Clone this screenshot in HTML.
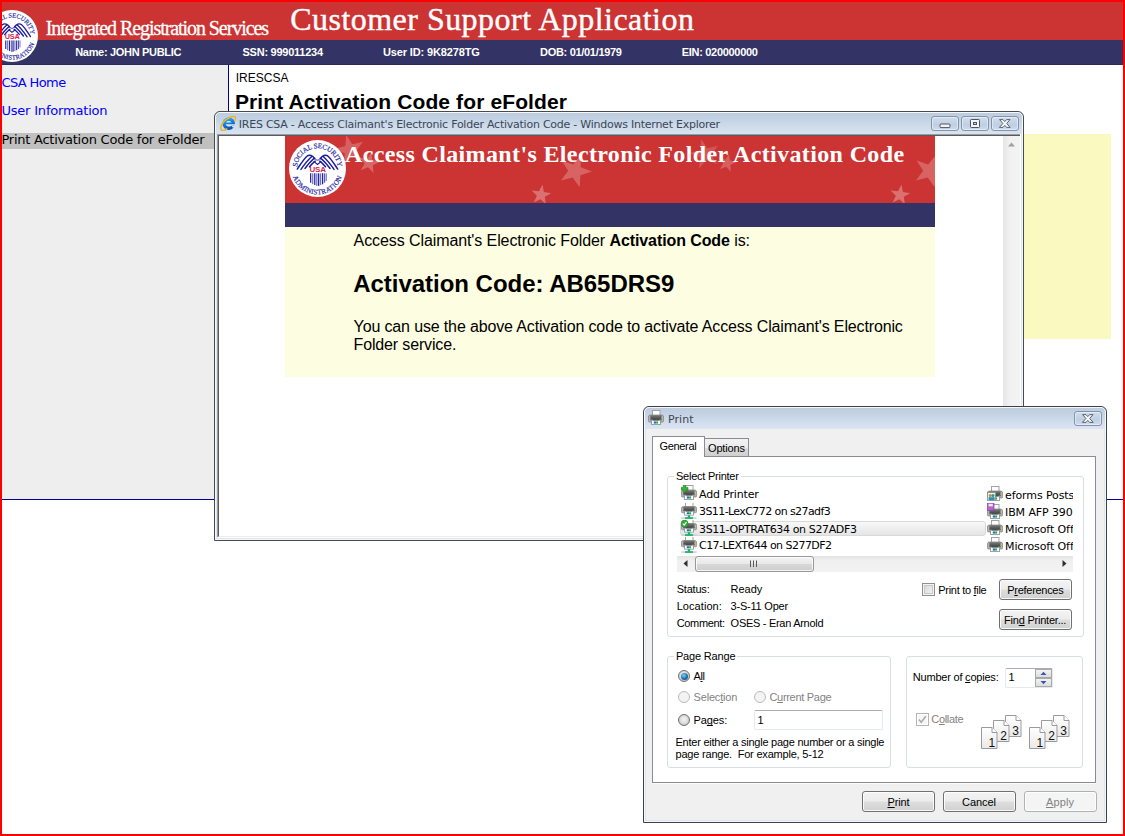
<!DOCTYPE html>
<html lang="en"><head><meta charset="utf-8">
<title>IRES CSA - Print Activation Code for eFolder</title>
<style>
html,body{margin:0;padding:0;background:#fff;}
body{width:1125px;height:836px;overflow:hidden;position:relative;font-family:"Liberation Sans",Arial,sans-serif;}
.a{position:absolute;}
.t{position:absolute;white-space:nowrap;line-height:1;margin:0;padding:0;}
.t b{font-weight:700;}
.t u{text-decoration:underline;text-decoration-skip-ink:none;text-underline-offset:1px;text-decoration-thickness:1px;}
#frame{position:absolute;left:0;top:0;width:1121px;height:832px;border:2px solid #ff0000;z-index:50;pointer-events:none;}
.btn{position:absolute;box-sizing:border-box;border:1px solid #707070;border-radius:3px;background:linear-gradient(#f3f3f3 0%,#ececec 48%,#dedede 52%,#d0d0d0 100%);box-shadow:inset 0 0 0 1px rgba(255,255,255,.85);}
.btn.dis{border-color:#adb2b5;background:#f4f4f4;}
.grp{position:absolute;box-sizing:border-box;border:1px solid #d5dfe5;border-radius:3px;}
.grplbl{position:absolute;background:#fff;height:12px;}
.wb{position:absolute;box-sizing:border-box;border:1px solid #8592ad;border-radius:3px;background:linear-gradient(#cfdceb 0%,#c3d2e4 50%,#bccde1 51%,#cddbeb 100%);box-shadow:inset 0 0 0 1px rgba(255,255,255,.45);}
.radio{position:absolute;box-sizing:border-box;width:12px;height:12px;border-radius:50%;border:1px solid #6f6f6f;background:radial-gradient(circle at 50% 45%,#f4f4f4 0%,#dcdcdc 50%,#b4b4b4 100%);}
.radio.dis{border-color:#bcbcbc;background:#f3f3f3;}
.chk{position:absolute;box-sizing:border-box;width:13px;height:13px;border:1px solid #8e8f8f;background:linear-gradient(135deg,#d3d3d3,#f6f6f6);box-shadow:inset 0 0 0 1px #f4f4f4,inset 0 0 0 2px #c4c7cb;}
</style></head><body>
<svg width="0" height="0" style="position:absolute">
<defs>
<g id="seal">
 <circle cx="50" cy="50" r="50" fill="#fff"/>
 <path id="arcT" d="M14.59,52.48 A35.5,35.5 0 1 1 85.41,52.48" fill="none"/>
 <path id="arcB" d="M4.94,56.33 A45.5,45.5 0 0 0 95.06,56.33" fill="none"/>
 <text font-family="'Liberation Serif',serif" font-size="12.5" font-weight="400" fill="#3030a8" stroke="#3030a8" stroke-width="0.35" letter-spacing="-0.2"><textPath href="#arcT" startOffset="50%" text-anchor="middle">SOCIAL SECURITY</textPath></text>
 <text font-family="'Liberation Serif',serif" font-size="12.5" font-weight="400" fill="#3030a8" stroke="#3030a8" stroke-width="0.35" letter-spacing="0.45"><textPath href="#arcB" startOffset="50%" text-anchor="middle">ADMINISTRATION</textPath></text>
 <g fill="none" stroke="#1c1c9c" stroke-width="2.6" stroke-linecap="round">
  <path d="M45,33 C42,27 36,25 32,28 C26,33 20,43 14.5,51"/>
  <path d="M40,29 C33,35 27,43 21,51.5"/>
  <path d="M43,33 C37,38 33,43 28,50"/>
  <path d="M46,37 C42,40 39,43 36,47"/>
  <path d="M55,33 C58,27 64,25 68,28 C74,33 80,43 85.5,51"/>
  <path d="M60,29 C67,35 73,43 79,51.5"/>
  <path d="M57,33 C63,38 67,43 72,50"/>
  <path d="M54,37 C58,40 61,43 64,47"/>
  <path d="M45,31 C46,37 54,37 55,31" stroke-width="1.6"/>
  <path d="M44,38 L50,43 L56,38" stroke-width="2"/>
 </g>
 <text x="50.3" y="56.6" text-anchor="middle" font-family="'Liberation Sans',sans-serif" font-size="14" font-weight="700" fill="#d21f4c" letter-spacing="-0.3">USA</text>
 <g stroke="#2424a4">
  <path d="M38,58.5V75" stroke-width="2.2"/><path d="M41.7,58.5V77.5" stroke-width="1.4"/><path d="M45.2,58.5V79" stroke-width="2.2"/><path d="M48.8,58.5V80.5" stroke-width="1.4"/><path d="M52,58.5V80.5" stroke-width="2.4"/><path d="M55.6,58.5V79" stroke-width="1.4"/><path d="M59,58.5V77.5" stroke-width="2.2"/><path d="M62.6,58.5V75" stroke-width="1.6"/><path d="M65.4,58.5V72" stroke-width="1.2"/>
 </g>
</g>
<g id="star"><path d="M0,-10 L2.35,-3.24 L9.51,-3.09 L3.8,1.24 L5.88,8.09 L0,4 L-5.88,8.09 L-3.8,1.24 L-9.51,-3.09 L-2.35,-3.24 Z"/></g>
<g id="ie">
 <circle cx="8.7" cy="8.6" r="6.3" fill="url(#ieg)"/>
 <path d="M6,7.6 C6.3,5.6 11,5.4 11.5,7.6 Z" fill="#dfe9f3"/>
 <path d="M5.6,9.3 H15.2 V10.4 H11.6 C10.8,12 6.6,12.3 5.6,9.3Z" fill="#dfe9f3"/>
 <path d="M11.4,10.4 H15.6 V12 L12.5,12.6Z" fill="#d6e2ef"/>
 <path d="M15.3,2.2 C13.6,0.2 8,2.2 4,6.6 C0.8,10.2 0,13.9 1.5,15.1 C2.9,16.1 5.4,14.8 6.6,13.8" fill="none" stroke="#f2b41c" stroke-width="1.5" stroke-linecap="round"/>
 <path d="M15.3,2.2 C15.9,3.2 15.6,4.4 15,5.4" fill="none" stroke="#f2b41c" stroke-width="1.3" stroke-linecap="round"/>
</g>
<linearGradient id="ieg" x1="0" y1="0" x2="0.4" y2="1"><stop offset="0" stop-color="#4fc3ff"/><stop offset="0.5" stop-color="#1a86e0"/><stop offset="1" stop-color="#0a4fb0"/></linearGradient>
<g id="prn">
 <rect x="4.5" y="0.5" width="7.5" height="5.2" fill="#fff" stroke="#a3a3a3" stroke-width="1"/>
 <path d="M2.5,5 H13.5 Q15.6,5 15.6,7 V10.8 Q15.6,12 14.4,12 H1.6 Q0.4,12 0.4,10.8 V7 Q0.4,5 2.5,5Z" fill="#b4b4b4" stroke="#7a7a7a" stroke-width="0.7"/>
 <rect x="2.4" y="5.2" width="11.2" height="5" fill="url(#prg)"/>
 <rect x="3.6" y="9.8" width="8.8" height="4.8" fill="#fff" stroke="#8a8a8a" stroke-width="0.8"/>
 <rect x="4.4" y="9.4" width="7.2" height="1.1" fill="#2e2e2e"/>
 <rect x="5.8" y="11.4" width="2.2" height="2.2" fill="#1f6fd0"/><rect x="8.1" y="11.4" width="2" height="2.2" fill="#2aa84a"/>
 <rect x="13.5" y="7.4" width="1.1" height="1.4" fill="#8fe070"/>
</g>
<linearGradient id="prg" x1="0" y1="0" x2="0" y2="1"><stop offset="0" stop-color="#7a7a7a"/><stop offset="1" stop-color="#3c3c3c"/></linearGradient>
<g id="net">
 <rect x="0.3" y="14.3" width="15.4" height="1.5" fill="#c9cfd2"/>
 <rect x="6.8" y="12.2" width="2.4" height="2.6" fill="#18b566"/>
 <rect x="4" y="14.2" width="8" height="1.7" fill="#18b566"/>
</g>
<g id="pg">
 <path d="M0.5,0.5 H11 L16,5.5 V21.5 H0.5 Z" fill="url(#pgg)" stroke="#9b9b9b" stroke-width="1"/>
 <path d="M11,0.5 V5.5 H16" fill="#fff" stroke="#9b9b9b" stroke-width="1"/>
</g>
<linearGradient id="pgg" x1="0" y1="0" x2="0" y2="1"><stop offset="0" stop-color="#fff"/><stop offset="1" stop-color="#e9e9e9"/></linearGradient>
</defs></svg>
<!-- ===== base page ===== -->
<div class="a" style="left:2px;top:2px;width:1121px;height:38px;background:#cc3333;"></div>
<div class="a" style="left:2px;top:40px;width:1121px;height:25px;background:#333366;border-bottom:1px solid #2a2a5c;box-sizing:border-box;"></div>
<div class="a" style="left:2px;top:65px;width:226px;height:434px;background:#eeeeee;"></div>
<div class="a" style="left:228px;top:65px;width:1px;height:434px;background:#000099;"></div>
<div class="a" style="left:2px;top:499px;width:1121px;height:1px;background:#000099;"></div>
<div class="a" style="left:2px;top:133px;width:226px;height:16px;background:#c0c0c0;"></div>
<div class="a" style="left:236px;top:134px;width:875px;height:205px;background:#fafac0;"></div>
<!-- seal (header) -->
<svg class="a" style="left:-14px;top:9.5px;" width="52" height="52" viewBox="0 0 100 100">
<use href="#seal"/></svg>
<div class="t" style="-webkit-text-stroke:0.30px #fff;left:45.7px;top:17.8px;font-family:'Liberation Serif', Georgia, serif;font-size:20px;font-weight:400;color:#fff;letter-spacing:-1.071px;">Integrated Registration Services</div>
<div class="t" style="-webkit-text-stroke:0.40px #fff;left:290.26px;top:3.2px;font-family:'Liberation Serif', Georgia, serif;font-size:32px;font-weight:400;color:#fff;letter-spacing:0.466px;">Customer Support Application</div>
<div class="t" style="left:75.2px;top:47px;font-family:'Liberation Sans', Arial, sans-serif;font-size:11px;font-weight:700;color:#fff;letter-spacing:-0.31px;">Name: JOHN PUBLIC</div>
<div class="t" style="left:242.5px;top:47px;font-family:'Liberation Sans', Arial, sans-serif;font-size:11px;font-weight:700;color:#fff;letter-spacing:-0.247px;">SSN: 999011234</div>
<div class="t" style="left:383.0px;top:47px;font-family:'Liberation Sans', Arial, sans-serif;font-size:11px;font-weight:700;color:#fff;letter-spacing:-0.141px;">User ID: 9K8278TG</div>
<div class="t" style="left:540.0px;top:47px;font-family:'Liberation Sans', Arial, sans-serif;font-size:11px;font-weight:700;color:#fff;letter-spacing:-0.302px;">DOB: 01/01/1979</div>
<div class="t" style="left:681.8px;top:47px;font-family:'Liberation Sans', Arial, sans-serif;font-size:11px;font-weight:700;color:#fff;letter-spacing:-0.31px;">EIN: 020000000</div>
<div class="t" style="left:1.42px;top:75.6px;font-family:'DejaVu Sans', Verdana, sans-serif;font-size:13px;font-weight:400;color:#0000ff;letter-spacing:-0.604px;">CSA Home</div>
<div class="t" style="left:1.42px;top:104.4px;font-family:'DejaVu Sans', Verdana, sans-serif;font-size:13px;font-weight:400;color:#0000ff;letter-spacing:-0.19px;">User Information</div>
<div class="t" style="left:1.42px;top:133px;font-family:'DejaVu Sans', Verdana, sans-serif;font-size:13px;font-weight:400;color:#000;letter-spacing:-0.24px;">Print Activation Code for eFolder</div>
<div class="t" style="left:235.76px;top:71.8px;font-family:'Liberation Sans', Arial, sans-serif;font-size:12px;font-weight:400;color:#000;letter-spacing:-0.001px;">IRESCSA</div>
<div class="t" style="left:234.96px;top:90.9px;font-family:'Liberation Sans', Arial, sans-serif;font-size:21px;font-weight:700;color:#000;letter-spacing:0.117px;">Print Activation Code for eFolder</div>
<!-- ===== IE popup window ===== -->
<div class="a" style="left:214px;top:111px;width:810px;height:430px;box-sizing:border-box;border:1px solid #4a4a4a;border-radius:6px 6px 0 0;background:linear-gradient(#bbcbdd 0px,#c5d4e5 8px,#dbe6f3 24px,#dbe6f3 100%);overflow:hidden;">
 <div class="a" style="left:0;top:0;width:806px;height:426px;border:1px solid #f4f8fc;border-radius:5px 5px 0 0;"></div>
</div>
<div class="a" style="left:217px;top:134px;width:803px;height:403px;background:#9a9ca0;"></div>
<div class="a" style="left:218px;top:135px;width:802px;height:1px;background:#5a5a5a;"></div>
<div class="a" style="left:218px;top:136px;width:1px;height:400px;background:#5a5a5a;"></div>
<div class="a" style="left:1020px;top:134px;width:1px;height:404px;background:#fdfeff;"></div>
<div class="a" style="left:219px;top:136px;width:801px;height:400px;background:#fff;"></div>
<div class="a" style="left:219px;top:536px;width:801px;height:1px;background:#ededed;"></div>
<div class="a" style="left:217px;top:537px;width:804px;height:1px;background:#fff;"></div>
<svg class="a" style="left:220px;top:115px;" width="16" height="16" viewBox="0 0 16 16"><use href="#ie"/></svg>
<!-- caption buttons -->
<div class="wb" style="left:931px;top:116px;width:28px;height:15px;"></div>
<div class="wb" style="left:961px;top:116px;width:28px;height:15px;"></div>
<div class="wb" style="left:991px;top:116px;width:28px;height:15px;"></div>
<svg class="a" style="left:931px;top:116px;" width="88" height="15" viewBox="0 0 88 15">
 <rect x="9" y="8" width="10" height="3.6" rx="1" fill="#f4f4f4" stroke="#4a5368" stroke-width="1"/>
 <rect x="39.5" y="3.5" width="9" height="8" rx="0.8" fill="#f4f4f4" stroke="#4a5368" stroke-width="1"/>
 <rect x="42.5" y="6.5" width="3" height="2" fill="#c9d7e8" stroke="#4a5368" stroke-width="1"/>
 <path d="M68.6,3.6 L72,3.6 L73.8,5.6 L75.6,3.6 L79,3.6 L75.7,7.5 L79.2,11.4 L75.6,11.4 L73.8,9.4 L72,11.4 L68.4,11.4 L71.9,7.5 Z" fill="#f6f6f6" stroke="#4a5368" stroke-width="0.9" stroke-linejoin="round"/>
</svg>
<!-- scrollbar -->
<div class="a" style="left:1003px;top:136px;width:17px;height:400px;background:linear-gradient(90deg,#e6e6e6,#f1f1f1 40%,#f3f3f3);"></div>
<svg class="a" style="left:1003px;top:136px;" width="17" height="17" viewBox="0 0 17 17"><path d="M5,10.5 L8.5,6.5 L12,10.5 Z" fill="#a0a0a0"/></svg>
<!-- banner -->
<div class="a" style="left:285px;top:136px;width:650px;height:67px;background:#cc3333;overflow:hidden;">
 <svg class="a" style="left:0;top:0;" width="650" height="67" viewBox="285 136 650 67">
  <g fill="#fff">
   <use href="#star" transform="translate(350,150) rotate(-14) scale(1.55)" opacity=".22"/>
   <use href="#star" transform="translate(369,163) rotate(12) scale(1.1)" opacity=".25"/>
   <use href="#star" transform="translate(575,171) rotate(20) scale(1.7)" opacity=".24"/>
   <use href="#star" transform="translate(541,195) rotate(8) scale(1.05)" opacity=".3"/>
   <use href="#star" transform="translate(705,154) rotate(-14) scale(1.55)" opacity=".17"/>
   <use href="#star" transform="translate(727,163) rotate(12) scale(.95)" opacity=".22"/>
   <use href="#star" transform="translate(930,171) rotate(20) scale(1.7)" opacity=".24"/>
   <use href="#star" transform="translate(900,195) rotate(8) scale(1.05)" opacity=".3"/>
  </g>
 </svg>
</div>
<div class="a" style="left:285px;top:203px;width:650px;height:24px;background:#333366;"></div>
<div class="a" style="left:285px;top:227px;width:650px;height:150px;background:#fdfde1;"></div>
<svg class="a" style="left:289px;top:140px;" width="57" height="57" viewBox="0 0 100 100"><use href="#seal"/></svg>
<div class="t" style="left:238.81px;top:118.6px;font-family:'DejaVu Sans', Verdana, sans-serif;font-size:11px;font-weight:400;color:#3b4657;letter-spacing:-0.242px;">IRES CSA - Access Claimant's Electronic Folder Activation Code - Windows Internet Explorer</div>
<div class="t" style="left:345.02px;top:142px;font-family:'Liberation Serif', Georgia, serif;font-size:24px;font-weight:700;color:#fff;letter-spacing:0.36px;">Access Claimant's Electronic Folder Activation Code</div>
<div class="t" style="left:353.58px;top:232.8px;font-family:'Liberation Sans', Arial, sans-serif;font-size:16px;font-weight:400;color:#000;letter-spacing:-0.092px;">Access Claimant's Electronic Folder <b>Activation Code</b> is:</div>
<div class="t" style="left:353.22px;top:271.5px;font-family:'Liberation Sans', Arial, sans-serif;font-size:24px;font-weight:700;color:#000;letter-spacing:-0.028px;">Activation Code: AB65DRS9</div>
<div class="t" style="left:353.58px;top:318.7px;font-family:'Liberation Sans', Arial, sans-serif;font-size:16px;font-weight:400;color:#000;letter-spacing:-0.141px;">You can use the above Activation code to activate Access Claimant's Electronic</div>
<div class="t" style="left:353.58px;top:336.8px;font-family:'Liberation Sans', Arial, sans-serif;font-size:16px;font-weight:400;color:#000;letter-spacing:-0.149px;">Folder service.</div>
<!-- ===== Print dialog ===== -->
<div class="a" style="left:643px;top:406px;width:464px;height:417px;box-sizing:border-box;border:1px solid #404040;border-radius:6px 6px 0 0;background:linear-gradient(#bbcbdd 0px,#c5d4e5 8px,#dbe6f3 22px,#dbe6f3 100%);overflow:hidden;">
 <div class="a" style="left:0;top:0;width:460px;height:413px;border:1px solid #f4f8fc;border-radius:5px 5px 0 0;"></div>
</div>
<div class="a" style="left:646px;top:429px;width:458px;height:391px;background:#f0f0f0;"></div>
<svg class="a" style="left:648px;top:410px;" width="16" height="16" viewBox="0 0 16 16"><use href="#prn"/></svg>
<div class="wb" style="left:1074px;top:411px;width:28px;height:15px;"></div>
<svg class="a" style="left:1074px;top:411px;" width="28" height="15" viewBox="60 0 28 15">
 <path d="M68.6,3.6 L72,3.6 L73.8,5.6 L75.6,3.6 L79,3.6 L75.7,7.5 L79.2,11.4 L75.6,11.4 L73.8,9.4 L72,11.4 L68.4,11.4 L71.9,7.5 Z" fill="#f6f6f6" stroke="#4a5368" stroke-width="0.9" stroke-linejoin="round"/>
</svg>
<!-- tab page -->
<div class="a" style="left:652px;top:456px;width:444px;height:327px;box-sizing:border-box;border:1px solid #898c95;background:#fff;"></div>
<div class="a" style="left:652px;top:783px;width:444px;height:1px;background:#fbfbfb;"></div>
<!-- tabs -->
<div class="a" style="left:704px;top:438px;width:45px;height:19px;box-sizing:border-box;border:1px solid #898c95;border-bottom:none;border-left:none;background:linear-gradient(#f2f2f2 0%,#ebebeb 50%,#dddddd 51%,#cfcfcf 100%);height:18px;"></div>
<div class="a" style="left:652px;top:436px;width:53px;height:21px;box-sizing:border-box;border:1px solid #898c95;border-bottom:none;background:#fff;"></div>
<!-- Select Printer group -->
<div class="grp" style="left:667px;top:476px;width:417px;height:161px;"></div>
<div class="grplbl" style="left:674px;top:470px;width:67px;"></div>
<!-- selected row -->
<div class="a" style="left:680px;top:521px;width:306px;height:15px;box-sizing:border-box;border:1px solid #d9d9d9;border-radius:3px;background:linear-gradient(#f8f8f8,#e5e5e5);"></div>
<!-- printer icons left -->
<svg class="a" style="left:681px;top:485px;" width="16" height="16" viewBox="0 0 16 16"><use href="#prn"/><path d="M2.2,0.2h2.6v2.2h2.2v2.6h-2.2v2.2h-2.6v-2.2h-2.2v-2.6h2.2z" fill="#3db33d" stroke="#1d7f25" stroke-width="0.6"/></svg>
<svg class="a" style="left:681px;top:503px;" width="16" height="16" viewBox="0 0 16 16"><use href="#prn" transform="translate(0,-1) scale(1,.9)"/><use href="#net"/></svg>
<svg class="a" style="left:681px;top:520px;" width="16" height="16" viewBox="0 0 16 16"><use href="#prn" transform="translate(0,-1) scale(1,.9)"/><use href="#net"/><circle cx="3.6" cy="3.6" r="3.5" fill="#2fae3c" stroke="#1c7d28" stroke-width="0.5"/><path d="M1.8,3.7 L3.1,5.1 L5.5,2.2" fill="none" stroke="#fff" stroke-width="1.1"/></svg>
<svg class="a" style="left:681px;top:537px;" width="16" height="16" viewBox="0 0 16 16"><use href="#prn" transform="translate(0,-1) scale(1,.9)"/><use href="#net"/></svg>
<!-- printer icons right -->
<svg class="a" style="left:987px;top:486px;" width="16" height="16" viewBox="0 0 16 16"><use href="#prn"/><rect x="0.5" y="6.5" width="8" height="8" fill="#e9f3f6" stroke="#8a8a8a" stroke-width="0.8"/><circle cx="3.2" cy="9.6" r="1.5" fill="#c98a3a"/><circle cx="6" cy="9.6" r="1.5" fill="#2c9f6a"/><rect x="1.6" y="11.2" width="6" height="2.8" fill="#2a8fb5"/></svg>
<svg class="a" style="left:987px;top:503px;" width="16" height="16" viewBox="0 0 16 16"><use href="#prn" transform="translate(0,1)"/><rect x="0.5" y="0.5" width="6.5" height="7" fill="#b067c9" stroke="#8a3fa8" stroke-width="0.7"/><rect x="1.6" y="0.8" width="4.2" height="2.6" fill="#f1e4f6"/></svg>
<svg class="a" style="left:987px;top:520px;" width="16" height="16" viewBox="0 0 16 16"><use href="#prn"/></svg>
<svg class="a" style="left:987px;top:537px;" width="16" height="16" viewBox="0 0 16 16"><use href="#prn"/></svg>
<!-- list h-scrollbar -->
<div class="a" style="left:677px;top:556px;width:396px;height:16px;background:linear-gradient(#e3e3e3,#f0f0f0 30%,#f2f2f2);"></div>
<div class="a" style="left:695px;top:556px;width:119px;height:16px;box-sizing:border-box;border:1px solid #979797;border-radius:3px;background:linear-gradient(#f3f3f3 0%,#e9e9e9 48%,#d8d8d8 52%,#cdcdcd 100%);box-shadow:inset 0 0 0 1px rgba(255,255,255,.8);"></div>
<svg class="a" style="left:677px;top:556px;" width="396" height="16" viewBox="0 0 396 16">
 <path d="M10.5,4 V11 L6.5,7.5 Z" fill="#303030"/><path d="M385.5,4 V11 L389.5,7.5 Z" fill="#303030"/>
 <path d="M73.5,4.5V11M76.5,4.5V11M79.5,4.5V11" stroke="#5b5b5b" stroke-width="1"/>
</svg>
<!-- print to file / buttons -->
<div class="chk" style="left:922px;top:583px;"></div>
<div class="btn" style="left:999px;top:579px;width:73px;height:21px;"></div>
<div class="btn" style="left:999px;top:609px;width:73px;height:21px;"></div>
<!-- Page Range group -->
<div class="grp" style="left:667px;top:656px;width:224px;height:112px;"></div>
<div class="grplbl" style="left:674px;top:650px;width:63px;"></div>
<div class="radio" style="left:678px;top:670px;"></div>
<div class="a" style="left:680.5px;top:672.5px;width:7px;height:7px;border-radius:50%;background:radial-gradient(circle at 40% 35%,#7fd0f2,#176fb0 55%,#0b3f74);"></div>
<div class="radio dis" style="left:678px;top:691px;"></div>
<div class="radio dis" style="left:754px;top:691px;"></div>
<div class="radio" style="left:678px;top:714px;"></div>
<div class="a" style="left:754px;top:710px;width:129px;height:20px;box-sizing:border-box;border:1px solid #e3e9ef;border-top-color:#abadb3;border-radius:2px;background:#fff;"></div>
<!-- Copies group -->
<div class="grp" style="left:906px;top:656px;width:177px;height:112px;"></div>
<div class="a" style="left:1005px;top:668px;width:48px;height:20px;box-sizing:border-box;border:1px solid #e3e9ef;border-top-color:#abadb3;border-radius:2px;background:#fff;"></div>
<div class="a" style="left:1035px;top:669px;width:17px;height:9px;box-sizing:border-box;border:1px solid #a9a9a9;background:linear-gradient(#f4f4f4,#dcdcdc);"></div>
<div class="a" style="left:1035px;top:678px;width:17px;height:9px;box-sizing:border-box;border:1px solid #a9a9a9;background:linear-gradient(#f4f4f4,#dcdcdc);"></div>
<svg class="a" style="left:1035px;top:669px;" width="17" height="18" viewBox="0 0 17 18"><path d="M5.5,6 L8.5,2.8 L11.5,6 Z M5.5,12 L8.5,15.2 L11.5,12 Z" fill="#3a56a8"/></svg>
<div class="chk" style="left:916px;top:713px;border-color:#b5b5b5;background:#f6f6f6;box-shadow:inset 0 0 0 1px #fff;"></div>
<svg class="a" style="left:916px;top:713px;" width="13" height="13" viewBox="0 0 13 13"><path d="M3,6.6 L5.2,9.2 L9.8,3.2" fill="none" stroke="#a9a9a9" stroke-width="1.5"/></svg>
<!-- bottom buttons -->
<div class="btn" style="left:862px;top:791px;width:73px;height:21px;"></div>
<div class="btn" style="left:943px;top:791px;width:73px;height:21px;"></div>
<div class="btn dis" style="left:1024px;top:791px;width:73px;height:21px;"></div>
<div class="t" style="left:668.0px;top:413.8px;font-family:'DejaVu Sans', Verdana, sans-serif;font-size:11px;font-weight:400;color:#3b4657;letter-spacing:0.044px;">Print</div>
<div class="t" style="left:659.5px;top:440.7px;font-family:'Liberation Sans', Arial, sans-serif;font-size:11px;font-weight:400;color:#000;letter-spacing:-0.325px;">General</div>
<div class="t" style="left:708.0px;top:442.5px;font-family:'Liberation Sans', Arial, sans-serif;font-size:11px;font-weight:400;color:#000;letter-spacing:-0.155px;">Options</div>
<div class="t" style="left:676.0px;top:470.6px;font-family:'Liberation Sans', Arial, sans-serif;font-size:11px;font-weight:400;color:#000;letter-spacing:-0.242px;">Select Printer</div>
<div class="t" style="left:699.0px;top:489.4px;font-family:'DejaVu Sans', Verdana, sans-serif;font-size:11px;font-weight:400;color:#000;letter-spacing:-0.16px;">Add Printer</div>
<div class="t" style="left:699.0px;top:506.3px;font-family:'DejaVu Sans', Verdana, sans-serif;font-size:11px;font-weight:400;color:#000;letter-spacing:-0.586px;">3S11-LexC772 on s27adf3</div>
<div class="t" style="left:699.0px;top:523.5px;font-family:'DejaVu Sans', Verdana, sans-serif;font-size:11px;font-weight:400;color:#000;letter-spacing:-0.373px;">3S11-OPTRAT634 on S27ADF3</div>
<div class="t" style="left:699.0px;top:540.4px;font-family:'DejaVu Sans', Verdana, sans-serif;font-size:11px;font-weight:400;color:#000;letter-spacing:-0.532px;">C17-LEXT644 on S277DF2</div>
<div class="t" style="left:676.71px;top:583.8px;font-family:'Liberation Sans', Arial, sans-serif;font-size:11px;font-weight:400;color:#000;letter-spacing:-0.21px;">Status:</div>
<div class="t" style="left:730.61px;top:583.8px;font-family:'Liberation Sans', Arial, sans-serif;font-size:11px;font-weight:400;color:#000;letter-spacing:-0.052px;">Ready</div>
<div class="t" style="left:676.71px;top:600.8px;font-family:'Liberation Sans', Arial, sans-serif;font-size:11px;font-weight:400;color:#000;letter-spacing:0.054px;">Location:</div>
<div class="t" style="left:730.61px;top:600.8px;font-family:'Liberation Sans', Arial, sans-serif;font-size:11px;font-weight:400;color:#000;letter-spacing:-0.223px;">3-S-11 Oper</div>
<div class="t" style="left:676.71px;top:618.4px;font-family:'Liberation Sans', Arial, sans-serif;font-size:11px;font-weight:400;color:#000;letter-spacing:-0.337px;">Comment:</div>
<div class="t" style="left:730.61px;top:618.4px;font-family:'Liberation Sans', Arial, sans-serif;font-size:11px;font-weight:400;color:#000;letter-spacing:-0.29px;">OSES - Eran Arnold</div>
<div class="t" style="left:938.3px;top:584.7px;font-family:'Liberation Sans', Arial, sans-serif;font-size:11px;font-weight:400;color:#000;letter-spacing:-0.3px;">Print to <u>f</u>ile</div>
<div class="t" style="left:1007.3px;top:584.7px;font-family:'Liberation Sans', Arial, sans-serif;font-size:11px;font-weight:400;color:#000;letter-spacing:-0.294px;">P<u>r</u>eferences</div>
<div class="t" style="left:1004.11px;top:614.6px;font-family:'Liberation Sans', Arial, sans-serif;font-size:11px;font-weight:400;color:#000;letter-spacing:-0.225px;">Fin<u>d</u> Printer...</div>
<div class="t" style="left:675.9px;top:651.3px;font-family:'Liberation Sans', Arial, sans-serif;font-size:11px;font-weight:400;color:#000;letter-spacing:-0.165px;">Page Range</div>
<div class="t" style="left:693.61px;top:671px;font-family:'Liberation Sans', Arial, sans-serif;font-size:11px;font-weight:400;color:#000;letter-spacing:-0.48px;">A<u>l</u>l</div>
<div class="t" style="left:693.61px;top:691.8px;font-family:'Liberation Sans', Arial, sans-serif;font-size:11px;font-weight:400;color:#838383;letter-spacing:-0.199px;">Selec<u>t</u>ion</div>
<div class="t" style="left:769.4px;top:691.8px;font-family:'Liberation Sans', Arial, sans-serif;font-size:11px;font-weight:400;color:#838383;letter-spacing:-0.297px;">C<u>u</u>rrent Page</div>
<div class="t" style="left:693.61px;top:714.6px;font-family:'Liberation Sans', Arial, sans-serif;font-size:11px;font-weight:400;color:#000;letter-spacing:-0.118px;">Pa<u>g</u>es:</div>
<div class="t" style="left:757.5px;top:714.6px;font-family:'Liberation Sans', Arial, sans-serif;font-size:11px;font-weight:400;color:#000;letter-spacing:0px;">1</div>
<div class="t" style="left:675.5px;top:737px;font-family:'Liberation Sans', Arial, sans-serif;font-size:11px;font-weight:400;color:#000;letter-spacing:-0.24px;">Enter either a single page number or a single</div>
<div class="t" style="left:675.5px;top:749.4px;font-family:'Liberation Sans', Arial, sans-serif;font-size:11px;font-weight:400;color:#000;letter-spacing:-0.204px;">page range.&nbsp; For example, 5-12</div>
<div class="t" style="left:912.8px;top:672.4px;font-family:'Liberation Sans', Arial, sans-serif;font-size:11px;font-weight:400;color:#000;letter-spacing:-0.212px;">Number of <u>c</u>opies:</div>
<div class="t" style="left:1008.5px;top:672.4px;font-family:'Liberation Sans', Arial, sans-serif;font-size:11px;font-weight:400;color:#000;letter-spacing:0px;">1</div>
<div class="t" style="left:931.3px;top:714.4px;font-family:'Liberation Sans', Arial, sans-serif;font-size:11px;font-weight:400;color:#838383;letter-spacing:-0.329px;">C<u>o</u>llate</div>
<div class="t" style="left:887.5px;top:796.5px;font-family:'Liberation Sans', Arial, sans-serif;font-size:11px;font-weight:400;color:#000;letter-spacing:-0.159px;"><u>P</u>rint</div>
<div class="t" style="left:962.0px;top:796.5px;font-family:'Liberation Sans', Arial, sans-serif;font-size:11px;font-weight:400;color:#000;letter-spacing:-0.052px;">Cancel</div>
<div class="t" style="left:1046.01px;top:796.5px;font-family:'Liberation Sans', Arial, sans-serif;font-size:11px;font-weight:400;color:#838383;letter-spacing:0.115px;"><u>A</u>pply</div>
<!-- collate pages -->
<svg class="a" style="left:980px;top:714px;" width="96" height="38" viewBox="0 0 96 38" font-family="'Liberation Sans',sans-serif" font-size="12" fill="#111">
 <g id="set3">
  <use href="#pg" x="25" y="1"/><text x="35.5" y="20.5" text-anchor="middle">3</text>
  <use href="#pg" x="13" y="6"/><text x="23.5" y="26" text-anchor="middle">2</text>
  <use href="#pg" x="1" y="13"/><text x="11.8" y="33.3" text-anchor="middle">1</text>
 </g>
 <g transform="translate(48,0)">
  <use href="#pg" x="25" y="1"/><text x="35.5" y="20.5" text-anchor="middle">3</text>
  <use href="#pg" x="13" y="6"/><text x="23.5" y="26" text-anchor="middle">2</text>
  <use href="#pg" x="1" y="13"/><text x="11.8" y="33.3" text-anchor="middle">1</text>
 </g>
</svg>
<!-- right list column (clipped) -->
<div class="a" style="left:1005px;top:484px;width:68px;height:72px;overflow:hidden;font-family:'DejaVu Sans',Verdana,sans-serif;font-size:11px;line-height:17px;white-space:nowrap;color:#000;">
 <div style="position:absolute;left:0;top:3px;letter-spacing:-0.1px;">eforms Postscript<br>IBM AFP 3900<br>Microsoft Office Document<br>Microsoft Office Live</div>
</div>
<div id="frame"></div>
</body></html>
